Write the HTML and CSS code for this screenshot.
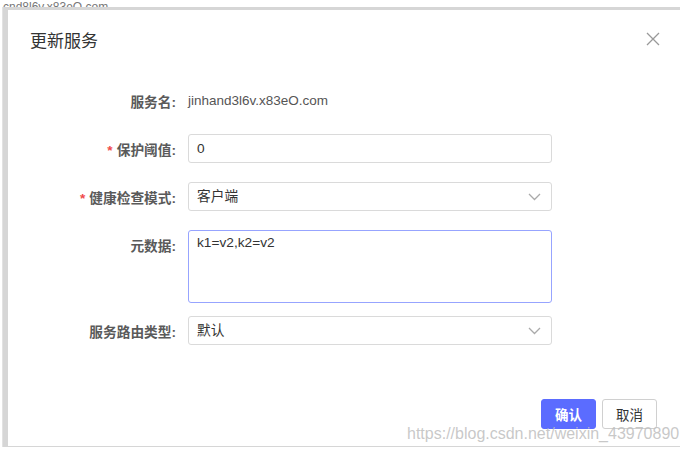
FILE: index.html
```html
<!DOCTYPE html>
<html lang="zh-CN">
<head>
    <meta charset="UTF-8">
    <title>更新服务</title>
    <link rel="stylesheet" href="styles.css">
</head>
<body>
    <div class="behind">cnd8l6v.x83eO.com</div>
    <div class="frame">
        <div class="modal">
            <div class="modal-header">
                <h2 class="modal-title">更新服务</h2>
                <span class="close">
                    <svg width="14" height="14" viewBox="0 0 14 14"><path d="M1 1L13 13M13 1L1 13" stroke="#999" stroke-width="1.3" fill="none"/></svg>
                </span>
            </div>
            <form class="modal-body">
                <div class="form-row">
                    <label class="form-label">服务名:</label>
                    <div class="form-text">jinhand3l6v.x83eO.com</div>
                </div>
                <div class="form-row">
                    <label class="form-label"><span class="req">*</span>保护阈值:</label>
                    <div class="control">0</div>
                </div>
                <div class="form-row">
                    <label class="form-label"><span class="req">*</span>健康检查模式:</label>
                    <div class="control select">客户端
                        <svg class="arrow" width="13" height="8" viewBox="0 0 13 8"><path d="M1 1L6.5 6.5L12 1" stroke="#aaa" stroke-width="1.3" fill="none"/></svg>
                    </div>
                </div>
                <div class="form-row meta">
                    <label class="form-label">元数据:</label>
                    <div class="control textarea">k1=v2,k2=v2</div>
                </div>
                <div class="form-row">
                    <label class="form-label">服务路由类型:</label>
                    <div class="control select">默认
                        <svg class="arrow" width="13" height="8" viewBox="0 0 13 8"><path d="M1 1L6.5 6.5L12 1" stroke="#aaa" stroke-width="1.3" fill="none"/></svg>
                    </div>
                </div>
            </form>
            <div class="modal-footer">
                <button type="button" class="btn btn-primary">确认</button>
                <button type="button" class="btn">取消</button>
            </div>
        </div>
    </div>
    <div class="watermark">https://blog.csdn.net/weixin_43970890</div>
</body>
</html>
```

FILE: styles.css
```css
body {
    margin: 0;
    background: #fff;
    font-family: "Liberation Sans", "Noto Sans CJK SC", sans-serif;
    color: #333;
    position: relative;
    width: 687px;
    height: 454px;
    overflow: hidden;
}

.behind {
    height: 7px;
    overflow: hidden;
    padding-left: 3px;
    font-size: 12px;
    line-height: 14px;
    color: #777;
}

.frame {
    width: 678px;
    margin-left: 2px;
    padding: 3px 0 1px 5px;
    background: #d6d6d6;
    box-sizing: border-box;
    border-left: 1px solid #e2e2e2;
}

.modal {
    background: #fff;
    height: 436px;
    display: flex;
    flex-direction: column;
}

.modal-header {
    height: 56px;
    display: flex;
    align-items: center;
    justify-content: space-between;
    padding: 0 20px 0 22px;
    box-sizing: border-box;
}

.modal-title {
    margin: 0;
    font-size: 17px;
    font-weight: normal;
    color: #333;
    padding-top: 2px;
}

.close {
    display: flex;
    padding-top: 2px;
}

.modal-body {
    padding-top: 20px;
    flex: 1;
}

.form-row {
    display: flex;
    align-items: center;
    margin-bottom: 19px;
    min-height: 29px;
}

.form-row.meta {
    align-items: flex-start;
    margin-bottom: 13px;
}

.form-label {
    width: 168px;
    text-align: right;
    padding-right: 12px;
    box-sizing: content-box;
    font-size: 13.7px;
    font-weight: bold;
    color: #5a5a5a;
}

.meta .form-label {
    padding-top: 5px;
}

.req {
    color: #f04b4b;
    margin-right: 4px;
}

.form-text {
    font-size: 13.5px;
    color: #555;
}

.control {
    width: 364px;
    height: 29px;
    box-sizing: border-box;
    border: 1px solid #dadada;
    border-radius: 3px;
    padding: 0 8px;
    font-size: 13.7px;
    line-height: 27px;
    color: #333;
    display: flex;
    align-items: center;
    justify-content: space-between;
}

.select {
    padding-right: 10px;
}

.textarea {
    height: 73px;
    align-items: flex-start;
    border-color: #97a4ff;
    line-height: 18px;
    padding-top: 3px;
}

.modal-footer {
    display: flex;
    justify-content: flex-end;
    gap: 6px;
    padding: 0 23px 17px 0;
}

.btn {
    width: 55px;
    height: 30px;
    border: 1px solid #d0d0d0;
    border-radius: 3px;
    background: #fff;
    color: #333;
    font-family: inherit;
    font-size: 13.5px;
    padding: 0;
}

.btn-primary {
    background: #5b6cff;
    border-color: #5b6cff;
    color: #fff;
    font-weight: bold;
}

.watermark {
    position: absolute;
    left: 407px;
    top: 425px;
    font-size: 16px;
    color: rgba(190, 190, 190, 0.85);
    white-space: nowrap;
}
```
